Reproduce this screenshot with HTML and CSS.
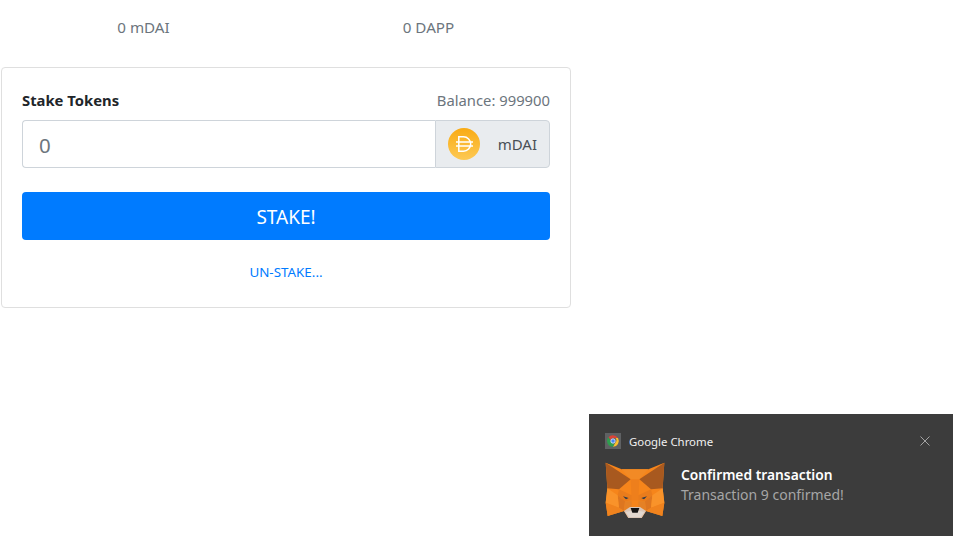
FILE: index.html
```html
<!DOCTYPE html>
<html lang="en">
<head>
<meta charset="utf-8">
<title>Stake Tokens</title>
<link rel="stylesheet" href="styles.css">
</head>
<body>
<main class="page">
  <div class="stats">
    <div class="stat">0 mDAI</div>
    <div class="stat">0 DAPP</div>
  </div>
  <section class="card">
    <div class="head">
      <strong class="title">Stake Tokens</strong>
      <span class="balance">Balance: 999900</span>
    </div>
    <div class="group">
      <div class="field">0</div>
      <div class="addon">
        <svg class="coin" viewBox="0 0 32 32" aria-hidden="true">
          <defs>
            <linearGradient id="coinFill" x1="0" y1="0" x2="0" y2="1">
              <stop offset="0" stop-color="#f9ab14"/>
              <stop offset="1" stop-color="#fdc954"/>
            </linearGradient>
          </defs>
          <circle cx="16" cy="16" r="16" fill="url(#coinFill)"/>
          <path d="M10.800 8.800H15.500a7.200 7.200 0 0 1 0 14.400H10.800zM8 14H25M8 18H25" fill="none" stroke="#fff" stroke-width="1.500"/>
        </svg>
        <span>mDAI</span>
      </div>
    </div>
    <button class="stake" type="button">STAKE!</button>
    <a class="unstake" href="#">UN-STAKE...</a>
  </section>
</main>
<aside class="toast">
  <div class="toast-top">
    <svg class="chrome" viewBox="0 0 16 16" aria-hidden="true">
      <rect width="16" height="16" fill="#5f6163"/>
      <path d="M8 2.200a5.800 5.800 0 0 1 5 2.900H8a2.900 2.900 0 0 0-2.600 1.700L3.400 4.300A5.800 5.800 0 0 1 8 2.200z" fill="#db4437"/>
      <path d="M13 5.100a5.800 5.800 0 0 1-5.100 8.700l2.600-4.300A2.900 2.900 0 0 0 10.500 5.100z" fill="#fbc02d"/>
      <path d="M7.900 13.800A5.800 5.800 0 0 1 3.400 4.300l2.500 4.300A2.900 2.900 0 0 0 9.500 10.500z" fill="#2e9e4f"/>
      <circle cx="8" cy="8" r="2.200" fill="#4285f4" stroke="#fff" stroke-width=".7"/>
    </svg>
    <span class="app">Google Chrome</span>
    <svg class="close" viewBox="0 0 10 10" aria-hidden="true"><path d="M.5.500l9 9M9.500.500l-9 9" stroke="#a3a3a3" stroke-width="1" fill="none"/></svg>
  </div>
  <div class="toast-body">
    <svg class="fox" viewBox="0 0 180 174" aria-hidden="true">
      <path fill="#f6851b" d="M2 2 50 22H130L178 2 173 79 178 122 172 162 123 147 110 168H70L57 147 8 162 2 122 7 79z"/>
      <path fill="#f28a25" d="M50 22H130L103 52H77z"/>
      <path fill="#a8591f" d="M2 2 77 52 42 82 7 79z"/>
      <path fill="#a8591f" d="M178 2 103 52 138 82 173 79z"/>
      <path fill="#ee7f1c" d="M77 52H103L100 115H80z"/>
      <path fill="#e97c1c" d="M42 82 80 100 80 115 60 118 38 100z"/>
      <path fill="#e97c1c" d="M138 82 100 100 100 115 120 118 142 100z"/>
      <path fill="#dd7620" d="M38 100 60 118 57 147 42 137z"/>
      <path fill="#dd7620" d="M142 100 120 118 123 147 138 137z"/>
      <path fill="#f9932a" d="M7 79 38 100 42 137 2 122z"/>
      <path fill="#f9932a" d="M173 79 142 100 138 137 178 122z"/>
      <path fill="#f0831e" d="M2 122 42 137 57 147 8 162z"/>
      <path fill="#f0831e" d="M178 122 138 137 123 147 172 162z"/>
      <path fill="#e58125" d="M60 118H80V135H75L57 147z"/>
      <path fill="#e58125" d="M120 118H100V135H105L123 147z"/>
      <path fill="#2b3a4c" d="M54 103 71 108 63 112z"/>
      <path fill="#2b3a4c" d="M126 103 109 108 117 112z"/>
      <path fill="#d9c6b8" d="M57 147 75 135H105L123 147 110 168H70z"/>
      <path fill="#e2d8d0" d="M62 150 80 146H100L118 150 107 165H73z"/>
      <path fill="#141414" d="M77 138H103L98 152H82z"/>
    </svg>
    <div class="msg">
      <div class="msg-title">Confirmed transaction</div>
      <div class="msg-text">Transaction 9 confirmed!</div>
    </div>
  </div>
</aside>
</body>
</html>
```
FILE: styles.css
```css
* { box-sizing: border-box; }
html, body { margin: 0; height: 100%; background: #fff; overflow: hidden; }
body { font-family: "Noto Sans", "Open Sans", sans-serif; color: #212529; position: relative; }
.page { width: 572px; padding: 17px 1px 0; }
.stats { display: flex; height: 50px; justify-content: space-between; padding: 0; }
.stat { flex: 0 0 285px; text-align: center; font-size: 15.200px; line-height: 21px; color: #6c757d; }
.card { border: 1px solid #dfdfdf; border-radius: 4px; width: 570px; height: 241px; padding: 22px 20px 0; }
.head { display: flex; justify-content: space-between; align-items: center; height: 20px; }
.title { font-size: 14.800px; font-weight: 700; color: #212529; }
.balance { font-size: 14.800px; color: #6c757d; }
.group { display: flex; height: 48px; margin-top: 10px; }
.field { flex: 1; border: 1px solid #ced4da; border-right: 0; border-radius: 4px 0 0 4px; font-size: 20.500px; line-height: 48px; padding-left: 16px; color: #6c757d; }
.addon { width: 115px; display: flex; align-items: center; justify-content: space-between; padding: 0 12px; background: #e9ecef; border: 1px solid #ced4da; border-radius: 0 4px 4px 0; font-size: 15px; color: #495057; }
.coin { width: 32px; height: 32px; display: block; }
.stake { display: block; width: 100%; height: 48px; margin-top: 24px; border: 0; border-radius: 4px; background: #007bff; color: #fff; font: 400 19px/48px "Noto Sans", sans-serif; }
.unstake { display: block; margin-top: 22px; text-align: center; font-size: 13.400px; line-height: 20px; color: #007bff; text-decoration: none; }
.toast { position: absolute; left: 589px; top: 414px; width: 364px; height: 122px; background: #3c3c3c; color: #fff; padding: 19px 16px 0; }
.toast-top { display: flex; align-items: center; height: 16px; }
.chrome { width: 16px; height: 16px; display: block; }
.app { margin-left: 8px; font-size: 11.400px; color: #f0f0f0; }
.close { width: 10px; height: 10px; margin-left: auto; margin-right: 7px; display: block; }
.toast-body { display: flex; margin-top: 13px; }
.fox { width: 60px; height: 58px; display: block; }
.msg { margin-left: 16px; margin-top: 3px; }
.msg-title { font-size: 13.800px; line-height: 20px; font-weight: 600; color: #fff; }
.msg-text { font-size: 14px; line-height: 20px; color: #a6a6a6; }
```
